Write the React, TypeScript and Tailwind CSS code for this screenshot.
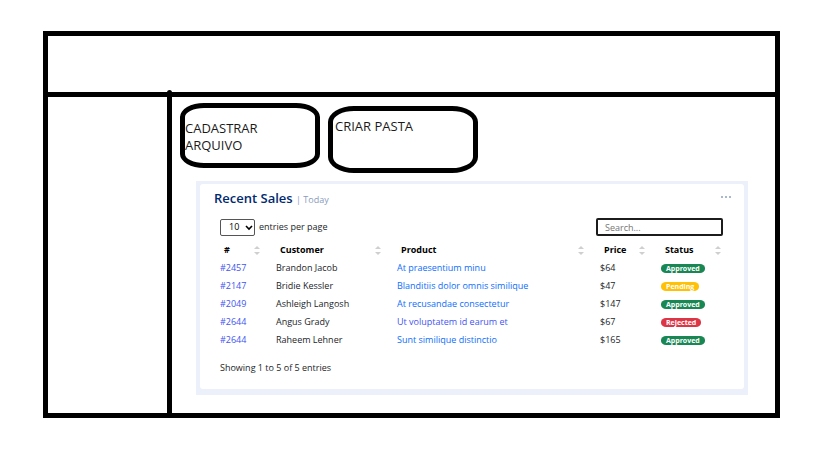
const sales = [
  { id: '#2457', customer: 'Brandon Jacob', product: 'At praesentium minu', price: '$64', status: 'Approved' },
  { id: '#2147', customer: 'Bridie Kessler', product: 'Blanditiis dolor omnis similique', price: '$47', status: 'Pending' },
  { id: '#2049', customer: 'Ashleigh Langosh', product: 'At recusandae consectetur', price: '$147', status: 'Approved' },
  { id: '#2644', customer: 'Angus Grady', product: 'Ut voluptatem id earum et', price: '$67', status: 'Rejected', visited: true },
  { id: '#2644', customer: 'Raheem Lehner', product: 'Sunt similique distinctio', price: '$165', status: 'Approved' },
];

const columns = [
  { label: '#', width: 'w-[56px]' },
  { label: 'Customer', width: 'w-[121px]' },
  { label: 'Product', width: 'w-auto' },
  { label: 'Price', width: 'w-[61px]' },
  { label: 'Status', width: 'w-[76px]' },
];

const badgeColors: Record<string, string> = {
  Approved: 'bg-[#198754]',
  Pending: 'bg-[#ffc107]',
  Rejected: 'bg-[#dc3545]',
};

function SortIcon() {
  return (
    <svg className="h-2.5 w-1.5 shrink-0" viewBox="0 0 6 10" fill="#cfcfcf" aria-hidden="true">
      <path d="M3 1L6 4H0Z" />
      <path d="M0 7H6L3 10Z" />
    </svg>
  );
}

function SalesTable() {
  return (
    <table className="w-full table-fixed border-collapse text-left">
      <thead>
        <tr className="h-[18px]">
          {columns.map((column) => (
            <th key={column.label} className={`${column.width} p-0 font-bold text-black`}>
              <div className="flex items-center justify-between px-2.5">
                {column.label}
                <SortIcon />
              </div>
            </th>
          ))}
        </tr>
      </thead>
      <tbody>
        {sales.map((sale, index) => (
          <tr key={index} className="h-[18px]">
            <td className="p-0 pl-1.5">
              <a href="#" className="text-[#4154f1]">{sale.id}</a>
            </td>
            <td className="p-0 pl-1.5">{sale.customer}</td>
            <td className="p-0 pl-1.5 whitespace-nowrap">
              <a href="#" className={sale.visited ? 'text-[#4154f1]' : 'text-[#0d6efd]'}>{sale.product}</a>
            </td>
            <td className="p-0 pl-1.5">{sale.price}</td>
            <td className="p-0 pl-1.5">
              <span className={`${badgeColors[sale.status]} block h-[9px] w-fit rounded-[5px/4px] px-[5px] text-[7px] leading-[9px] font-bold text-white`}>
                {sale.status}
              </span>
            </td>
          </tr>
        ))}
      </tbody>
    </table>
  );
}

function RecentSales() {
  return (
    <section className="mt-2 mr-[27px] ml-6 bg-[#ebf0fa] px-1 pt-[3px] pb-1.5">
      <div className="rounded-[3px] bg-white pt-[7px] pr-[13px] pb-[15px] pl-3.5 text-[9px] leading-3 text-[#212529]">
        <div className="flex items-start justify-between">
          <h2 className="text-[13px] leading-[14px] font-semibold text-[#012970]">
            Recent Sales <span className="text-[9px] font-normal text-[#899bbd]">| Today</span>
          </h2>
          <button type="button" aria-label="More options" className="pt-1">
            <svg className="h-1 w-2.5" viewBox="0 0 10 4" fill="#aab7cf" aria-hidden="true">
              <rect x="0" y="1" width="2" height="2" />
              <rect x="4" y="1" width="2" height="2" />
              <rect x="8" y="1" width="2" height="2" />
            </svg>
          </button>
        </div>
        <div className="mt-[11px] flex items-center justify-between pr-2 pl-1.5">
          <label className="flex items-center gap-1">
            <span className="relative">
              <select className="block h-[17px] w-[35px] appearance-none rounded-xs border border-[#555] bg-white pl-2 text-[9px] leading-3 text-black">
                <option>10</option>
                <option>25</option>
              </select>
              <svg className="pointer-events-none absolute top-1.5 right-0.5 h-1.5 w-2" viewBox="0 0 8 6" fill="none" stroke="#000" strokeWidth="1.6" aria-hidden="true">
                <path d="M1 1L4 4L7 1" />
              </svg>
            </span>
            entries per page
          </label>
          <input
            type="text"
            aria-label="Search"
            placeholder="Search..."
            className="h-[18px] w-[127px] rounded-xs border-2 border-[#1c1c1c] bg-white px-[7px] text-[9px] outline-none placeholder:text-[#757575]"
          />
        </div>
        <div className="mt-[5px]">
          <SalesTable />
        </div>
        <p className="mt-[13px] pl-1.5">Showing 1 to 5 of 5 entries</p>
      </div>
    </section>
  );
}

export default function App() {
  return (
    <div className="min-h-screen bg-white pt-[31px] pr-[39px] pb-[42px] pl-[43px] font-['Open_Sans','Noto_Sans',sans-serif]">
      <div className="border-5 border-black">
        <header className="h-[61px] border-b-5 border-black" />
        <div className="flex">
          <aside className="relative w-[124px] shrink-0 border-r-5 border-black">
            <span className="absolute -top-[7px] -right-[5px] h-2 w-[5px] rounded-t-full bg-black" />
          </aside>
          <main className="min-w-0 flex-1 pb-[18px]">
            <div className="flex items-start gap-2 pt-1.5 pl-2 text-[13px] leading-[17px] text-[#1a1a1a]">
              <button type="button" className="flex h-[65px] w-[140px] items-start rounded-[24px/14px] border-5 border-black pt-3 text-left">
                CADASTRAR
                <br />
                ARQUIVO
              </button>
              <button type="button" className="mt-[3px] flex h-[67px] w-[150px] items-start rounded-[26px/16px] border-5 border-black pt-[7px] pl-0.5 text-left">
                CRIAR PASTA
              </button>
            </div>
            <RecentSales />
          </main>
        </div>
      </div>
    </div>
  );
}
